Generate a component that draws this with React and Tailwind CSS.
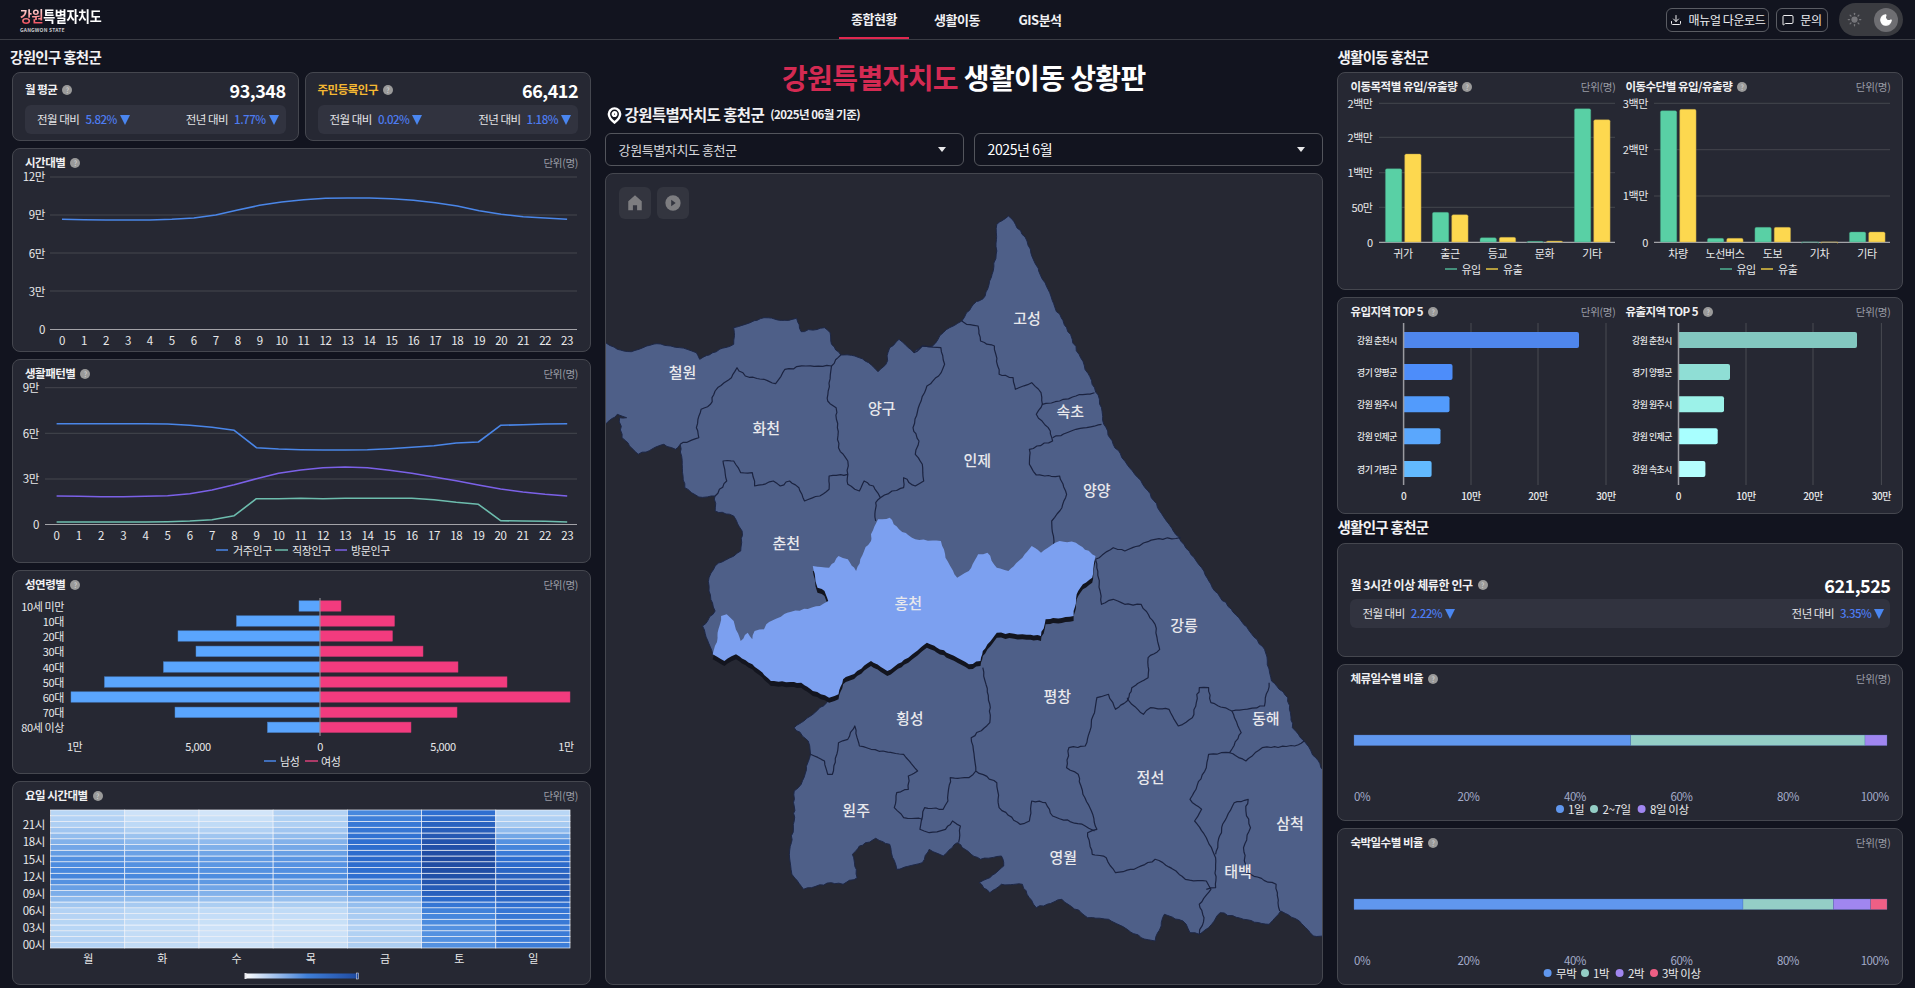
/**
 * Gangwon living-population dashboard — static snapshot of the Hongcheon view
 */

import { Download, MessageSquare, Sun, Moon } from 'lucide-react';

const HOURS = Array.from({ length: 24 }, (_, i) => i);

// page-space helpers: charts use viewBox in page pixels so coords are easy to check
function Plot({ x, y, w, h, children }) {
  return (
    <svg viewBox={`${x} ${y} ${w} ${h}`} width={w} height={h} className="block overflow-visible">
      {children}
    </svg>
  );
}

function T({ x, y, size = 11, anchor = 'middle', fill = '#e8e8ea', weight, children }) {
  return (
    <text x={x} y={y} fontSize={size} textAnchor={anchor} dominantBaseline="central" fill={fill} fontWeight={weight} letterSpacing="-0.4">
      {children}
    </text>
  );
}

function Help({ className = '' }) {
  return (
    <span className={`flex h-[10px] w-[10px] shrink-0 items-center justify-center rounded-full bg-[#9a9a9a] text-[7px] leading-none text-[#d8d8d8] ${className}`}>
      ?
    </span>
  );
}

function Down() {
  return <span className="ml-[3px] h-0 w-0 border-x-[5.5px] border-t-[10px] border-x-transparent border-t-[#4a86f0]" />;
}

function Card({ className = '', children }) {
  return <div className={`rounded-lg border border-[#45474f] bg-[#262833] ${className}`}>{children}</div>;
}

function Head({ title, unit = true }) {
  return (
    <div className="flex h-4 items-center justify-between">
      <div className="flex items-center gap-[5px]">
        <span className="text-[11.5px] font-bold tracking-[-0.5px] text-[#f0f0f2]">{title}</span>
        <Help />
      </div>
      {unit && <span className="text-[10.5px] tracking-[-0.3px] text-[#9a9ca5]">단위(명)</span>}
    </div>
  );
}

function SectionTitle({ children }) {
  return <h2 className="h-[32px] pt-[8px] text-[14.5px] font-bold leading-[18px] tracking-[-0.7px] text-[#f2f2f4]">{children}</h2>;
}

function Delta({ label, value }) {
  return (
    <div className="flex items-center">
      <span className="text-[11.5px] tracking-[-0.5px] text-[#e4e4e6]">{label}</span>
      <span className="ml-[6px] text-[11.5px] font-medium tracking-[-0.5px] text-[#4d7cf0]">{value}</span>
      <Down />
    </div>
  );
}

function Stat({ title, titleClass = 'text-[#f0f0f2]', value, month, year }) {
  return (
    <Card className="h-[69px] px-3 pt-2">
      <div className="flex h-[18px] items-center justify-between">
        <div className="flex items-center gap-[5px]">
          <span className={`text-[11.5px] font-bold tracking-[-0.5px] ${titleClass}`}>{title}</span>
          <Help />
        </div>
        <span className="text-[18px] font-bold tracking-[-0.5px] text-white">{value}</span>
      </div>
      <div className="mt-[6px] flex h-[29px] items-center justify-between rounded-md bg-[#31333f] pl-3 pr-[7px]">
        <Delta label="전월 대비" value={month} />
        <Delta label="전년 대비" value={year} />
      </div>
    </Card>
  );
}

/* ---------- left column charts ---------- */

function Grid({ lines, x1, x2, axisY, color = '#44464e' }) {
  return (
    <g>
      {lines.map(y => (
        <line key={y} x1={x1} x2={x2} y1={y} y2={y} stroke={color} strokeWidth="1" />
      ))}
      <line x1={x1} x2={x2} y1={axisY} y2={axisY} stroke="#a3a3a8" strokeWidth="1.2" />
    </g>
  );
}

function Series({ ys, x0, step, y0, color }) {
  const pts = ys.map((v, i) => `${(x0 + i * step).toFixed(1)},${(y0 + v / 3).toFixed(1)}`).join(' ');
  return <polyline points={pts} fill="none" stroke={color} strokeWidth="1.6" strokeLinejoin="round" />;
}

const TOTAL = [658, 659, 660, 660, 660, 658, 654, 645, 630, 616, 606, 599, 595, 594, 594, 596, 601, 608, 618, 632, 643, 650, 654, 658];

function HourlyChart() {
  return (
    <Plot x={25} y={173} w={553} h={175}>
      <Grid lines={[177, 215, 253, 291]} x1={50} x2={577} axisY={329.5} />
      {[['12만', 176], ['9만', 214], ['6만', 253], ['3만', 291], ['0', 329]].map(([t, y]) => (
        <T key={t} x={45} y={y} size={11.5} anchor="end">{t}</T>
      ))}
      <Series ys={TOTAL} x0={62} step={21.96} y0={0} color="#4a86e8" />
      {HOURS.map(h => <T key={h} x={62 + h * 21.96} y={340} size={11.5}>{h}</T>)}
    </Plot>
  );
}

const RESIDENT = [221, 221, 221, 221, 221, 222, 226, 232, 241, 293, 297, 299, 300, 300, 299, 296, 292, 287, 279, 276, 226, 224, 222, 221];
const WORKER = [516, 516, 516, 516, 516, 515, 513, 509, 497, 446, 446, 445, 446, 445, 445, 445, 445, 449, 457, 463, 512, 513, 514, 516];
const VISITOR = [438, 439, 440, 440, 439, 437, 431, 420, 404, 386, 370, 360, 353, 351, 353, 361, 370, 381, 392, 405, 417, 426, 433, 438];

function PatternChart() {
  const legend = [
    [216, 228, 233, '거주인구', '#4a86e8'],
    [275, 288, 292, '직장인구', '#6dbdae'],
    [335, 347, 351, '방문인구', '#7b61e8'],
  ];
  return (
    <Plot x={25} y={384} w={553} h={175}>
      <Grid lines={[387.7, 433.3, 479]} x1={45} x2={577} axisY={524.5} />
      {[['9만', 387], ['6만', 433], ['3만', 478], ['0', 524]].map(([t, y]) => (
        <T key={t} x={39} y={y} size={11.5} anchor="end">{t}</T>
      ))}
      <Series ys={RESIDENT} x0={56.6} step={22.2} y0={350} color="#4a86e8" />
      <Series ys={WORKER} x0={56.6} step={22.2} y0={350} color="#6dbdae" />
      <Series ys={VISITOR} x0={56.6} step={22.2} y0={350} color="#7b61e8" />
      {HOURS.map(h => <T key={h} x={56.6 + h * 22.2} y={535} size={11.5}>{h}</T>)}
      {legend.map(([a, b, tx, label, c]) => (
        <g key={label}>
          <line x1={a} x2={b} y1={550} y2={550} stroke={c} strokeWidth="1.5" />
          <T x={tx} y={550} anchor="start">{label}</T>
        </g>
      ))}
    </Plot>
  );
}

const AGE_ROWS = [
  ['10세 미만', 606, 299, 341],
  ['10대', 621, 236.5, 394.5],
  ['20대', 636, 178, 392.5],
  ['30대', 651.3, 196, 423],
  ['40대', 667, 163.5, 458],
  ['50대', 682, 104.5, 507],
  ['60대', 697, 71, 570],
  ['70대', 712.3, 175, 457],
  ['80세 이상', 727.3, 267.5, 411],
];

function AgeChart() {
  return (
    <Plot x={25} y={595} w={553} h={175}>
      {AGE_ROWS.map(([label, y, l, r]) => (
        <g key={label}>
          <T x={64} y={y} anchor="end">{label}</T>
          <rect x={l} y={y - 5.2} width={320 - l} height={10.4} fill="#5aa5fd" stroke="#4a86d0" strokeWidth="0.5" />
          <rect x={320} y={y - 5.2} width={r - 320} height={10.4} fill="#f23b7e" stroke="#c93a72" strokeWidth="0.5" />
        </g>
      ))}
      <line x1={320} x2={320} y1={598} y2={736} stroke="#9a9aa0" strokeWidth="1" />
      {[['1만', 74.6], ['5,000', 198], ['0', 320], ['5,000', 443], ['1만', 566]].map(([t, x], i) => (
        <T key={i} x={x} y={746}>{t}</T>
      ))}
      <line x1={264} x2={276} y1={761} y2={761} stroke="#4a86e8" strokeWidth="1.5" />
      <T x={280} y={761} anchor="start">남성</T>
      <line x1={305} x2={318} y1={761} y2={761} stroke="#d8407a" strokeWidth="1.5" />
      <T x={321} y={761} anchor="start">여성</T>
    </Plot>
  );
}

// anchor values every 3h (0..21) plus 23h
const HEAT = [
  [0.3, 0.28, 0.3, 0.5, 0.68, 0.62, 0.48, 0.32, 0.28],
  [0.24, 0.24, 0.27, 0.5, 0.66, 0.6, 0.45, 0.26, 0.2],
  [0.2, 0.2, 0.25, 0.48, 0.64, 0.58, 0.44, 0.25, 0.18],
  [0.22, 0.2, 0.25, 0.48, 0.64, 0.6, 0.48, 0.32, 0.3],
  [0.32, 0.3, 0.35, 0.55, 0.8, 0.82, 0.8, 0.75, 0.66],
  [0.62, 0.62, 0.7, 0.88, 0.97, 1, 0.95, 0.87, 0.8],
  [0.72, 0.74, 0.76, 0.88, 0.88, 0.8, 0.62, 0.35, 0.28],
];

const SCALE = [
  [0, [255, 255, 255]],
  [0.25, [192, 219, 246]],
  [0.45, [140, 184, 236]],
  [0.65, [74, 138, 222]],
  [0.8, [47, 111, 208]],
  [1, [31, 74, 160]],
];

function heatColor(v) {
  for (let i = 1; i < SCALE.length; i++) {
    if (v <= SCALE[i][0]) {
      const [a, ca] = SCALE[i - 1];
      const [b, cb] = SCALE[i];
      const t = (v - a) / (b - a);
      const c = ca.map((n, k) => Math.round(n + (cb[k] - n) * t));
      return `rgb(${c.join(',')})`;
    }
  }
  return 'rgb(31,74,160)';
}

function heatValue(day, hour) {
  const row = HEAT[day];
  if (hour >= 21) return row[7] + ((row[8] - row[7]) * (hour - 21)) / 2;
  const i = Math.floor(hour / 3);
  return row[i] + ((row[i + 1] - row[i]) * (hour % 3)) / 3;
}

function Heatmap() {
  const cw = (570 - 50.5) / 7;
  const rh = 138 / 24;
  const days = ['월', '화', '수', '목', '금', '토', '일'];
  const ticks = [['21시', 824], ['18시', 841], ['15시', 859.3], ['12시', 876.3], ['09시', 893.3], ['06시', 910], ['03시', 926.7], ['00시', 944]];
  return (
    <Plot x={25} y={806} w={553} h={175}>
      <defs>
        <linearGradient id="heat-legend">
          <stop offset="0" stopColor="#ffffff" />
          <stop offset="0.55" stopColor="#3f7fd8" />
          <stop offset="1" stopColor="#1f4aa0" />
        </linearGradient>
      </defs>
      {days.map((d, c) =>
        HOURS.map(h => (
          <rect
            key={`${d}${h}`}
            x={50.5 + c * cw}
            y={810 + (23 - h) * rh}
            width={cw}
            height={rh}
            fill={heatColor(heatValue(c, h))}
            stroke="#f2f6fc"
            strokeWidth="0.7"
          />
        ))
      )}
      {ticks.map(([t, y]) => <T key={t} x={45} y={y} anchor="end" size={11.5}>{t}</T>)}
      {days.map((d, c) => <T key={d} x={88 + c * 74.2} y={958}>{d}</T>)}
      <rect x={245} y={973.5} width={113} height={5} fill="url(#heat-legend)" />
      <rect x={244.5} y={973} width={2} height={6} fill="#e8e8ee" />
      <rect x={356.5} y={973} width={2} height={6} fill="#1f4aa0" stroke="#e8e8ee" strokeWidth="0.5" />
    </Plot>
  );
}

/* ---------- right column charts ---------- */

function Columns({ x, lines, axisX, ticks, tickX, groups, legendX }) {
  return (
    <Plot x={x} y={97} w={265} h={188}>
      <Grid lines={lines} x1={axisX} x2={x + 265} axisY={242.3} />
      {ticks.map(([t, y], i) => <T key={i} x={tickX} y={y} anchor="end" size={11}>{t}</T>)}
      {groups.map(([label, cx, a, b]) => (
        <g key={label}>
          <path d={`M${cx - 17.6} 242 V${a / 3 + 1.5} q0 -1.5 1.5 -1.5 h13.4 q1.5 0 1.5 1.5 V242 Z`} fill="#59d0a5" stroke="#3f8f78" strokeWidth="0.4" />
          <path d={`M${cx + 1.7} 242 V${b / 3 + 1.5} q0 -1.5 1.5 -1.5 h13.4 q1.5 0 1.5 1.5 V242 Z`} fill="#fdd84f" stroke="#a8934a" strokeWidth="0.4" />
          <T x={cx} y={253}>{label}</T>
        </g>
      ))}
      <line x1={legendX} x2={legendX + 12} y1={269} y2={269} stroke="#4fb394" strokeWidth="1.5" />
      <T x={legendX + 16.4} y={269} anchor="start">유입</T>
      <line x1={legendX + 41} x2={legendX + 53} y1={269} y2={269} stroke="#e5c443" strokeWidth="1.5" />
      <T x={legendX + 58} y={269} anchor="start">유출</T>
    </Plot>
  );
}

const ROW_Y = [340, 372, 404.3, 436.3, 469];

function Top5({ x, axisX, gridX, labelX, rows }) {
  return (
    <Plot x={x} y={322} w={265} h={188}>
      {gridX.map(g => <line key={g} x1={g} x2={g} y1={323} y2={485} stroke="#484a52" strokeWidth="1" />)}
      {rows.map(([label, end, color], i) => (
        <g key={label}>
          <T x={labelX} y={ROW_Y[i]} anchor="end" size={8.8} weight={500}>{label}</T>
          <path d={`M${axisX} ${ROW_Y[i] - 8} H${end - 2} q2 0 2 2 V${ROW_Y[i] + 6} q0 2 -2 2 H${axisX} Z`} fill={color} />
        </g>
      ))}
      <line x1={axisX} x2={axisX} y1={323} y2={485} stroke="#9a9aa0" strokeWidth="1.5" />
      {['0', '10만', '20만', '30만'].map((t, i) => (
        <T key={t} x={i === 0 ? axisX : gridX[i - 1]} y={495} size={10} weight={500}>{t}</T>
      ))}
    </Plot>
  );
}

function RatioBar({ y, stops, legend }) {
  const ticks = [['0%', 1363], ['20%', 1469.5], ['40%', 1576], ['60%', 1682.5], ['80%', 1789], ['100%', 1875.7]];
  return (
    <Plot x={1351} y={y} w={540} h={130}>
      {stops.map(([a, b, c]) => (
        <rect key={a} x={a} y={y + 48} width={b - a} height={10.6} fill={c} stroke="#4d6fb0" strokeWidth="0.3" />
      ))}
      {ticks.map(([t, x]) => <T key={t} x={x} y={y + 109} fill="#a3abc9" size={11.5}>{t}</T>)}
      {legend.map(([cx, tx, label, c]) => (
        <g key={label}>
          <circle cx={cx} cy={y + 122} r={4} fill={c} />
          <T x={tx} y={y + 122} anchor="start" size={11.5}>{label}</T>
        </g>
      ))}
    </Plot>
  );
}

/* ---------- map ---------- */

const p8 = pts => pts.map(([x, y]) => [600 + x * 0.4656, 200 + y / 3]);
const p9 = pts => pts.map(([x, y]) => [600 + x * 0.4656, 590 + y / 3]);

// break long edges up and shake them a little so boundaries read as coastline, not polygons
function rough(pts, seed = 7) {
  let s = seed;
  const rnd = () => {
    s = (s * 9301 + 49297) % 233280;
    return s / 233280 - 0.5;
  };
  const out = [];
  for (let i = 0; i < pts.length - 1; i++) {
    const [ax, ay] = pts[i];
    const [bx, by] = pts[i + 1];
    const n = Math.max(1, Math.round(Math.hypot(bx - ax, by - ay) / 4));
    for (let k = 0; k < n; k++) {
      const t = k / n;
      const j = k === 0 ? 0 : 1.6;
      out.push([ax + (bx - ax) * t + rnd() * j, ay + (by - ay) * t + rnd() * j]);
    }
  }
  out.push(pts[pts.length - 1]);
  return out;
}

const toD = (pts, close) => `M${pts.map(([x, y]) => `${x.toFixed(1)} ${y.toFixed(1)}`).join('L')}${close ? 'Z' : ''}`;

const OUTLINE = [
  ...p8([[-20, 410], [10, 425], [35, 445], [65, 452], [90, 440], [120, 428], [150, 435], [185, 445], [205, 455], [212, 475], [240, 455], [285, 430], [285, 380], [320, 365], [350, 350], [395, 358], [420, 352], [430, 392], [480, 380], [492, 395], [495, 430], [515, 462], [545, 465], [575, 485], [595, 512], [612, 490], [620, 440], [640, 415], [660, 440], [672, 455], [690, 435], [712, 435], [735, 395], [775, 360], [785, 335], [800, 310], [825, 285], [840, 220], [850, 150], [850, 70], [875, 45], [890, 70], [915, 120], [930, 180], [960, 265], [975, 320], [1000, 380], [1030, 470], [1060, 560], [1075, 620], [1080, 670], [1100, 730], [1135, 800], [1175, 870], [1200, 930], [1245, 1020], [1290, 1100]]),
  ...p9([[1318, 0], [1375, 90], [1425, 175], [1440, 270], [1475, 320], [1485, 410], [1510, 450], [1535, 500], [1555, 550], [1620, 620], [1620, 1035], [1555, 1035], [1530, 1035], [1500, 990], [1460, 960], [1435, 1000], [1380, 985], [1330, 965], [1305, 1010], [1285, 1030], [1265, 1025], [1250, 990], [1210, 970], [1190, 1050], [1160, 1040], [1130, 1015], [1090, 985], [1045, 980], [990, 925], [935, 950], [915, 910], [905, 880], [860, 880], [835, 905], [812, 875], [835, 860], [865, 825], [860, 795], [815, 805], [795, 790], [765, 755], [735, 795], [705, 775], [690, 815], [635, 835], [620, 760], [590, 742], [555, 765], [540, 790], [550, 860], [520, 880], [495, 875], [435, 895], [410, 850], [405, 780], [415, 690], [415, 600], [430, 580], [450, 490], [445, 450], [415, 410], [450, 375], [485, 335], [490, 320], [300, 200], [240, 190], [218, 105], [245, 60], [232, 0]]),
  ...p8([[232, 1130], [245, 1095], [300, 1050], [303, 990], [285, 945], [245, 930], [245, 885], [210, 888], [180, 860], [170, 730], [160, 745], [135, 730], [80, 760], [45, 710], [40, 650], [55, 650], [35, 640], [10, 670], [-20, 680]]),
];

const HONGCHEON = [
  ...p8([[455, 1095], [490, 1100], [510, 1065], [530, 1075], [548, 1110], [565, 1050], [580, 1020], [580, 1000], [595, 955], [620, 950], [640, 985], [675, 1015], [730, 1020], [740, 1070], [750, 1095], [765, 1130], [790, 1110], [810, 1060], [830, 1055], [850, 1100], [875, 1110], [905, 1070], [925, 1035], [945, 1055], [985, 1020], [1020, 1025], [1062, 1065], [1055, 1130], [1035, 1150]]),
  ...p9([[1025, 0], [1015, 60], [1015, 75], [955, 85], [945, 135], [905, 130], [850, 125], [820, 180], [815, 210], [790, 220], [750, 190], [700, 155], [660, 200], [615, 240], [580, 210], [550, 240], [520, 265], [510, 310], [490, 320], [455, 300], [430, 275], [365, 270], [325, 220], [290, 190], [265, 210], [240, 190], [250, 140], [258, 75], [270, 70], [285, 90], [300, 150], [315, 125], [325, 145], [330, 120], [350, 115], [355, 100], [400, 65], [470, 45], [488, 30], [480, 0]]),
  ...p8([[465, 1160], [455, 1095]]),
];

const BORDERS = [
  p8([[515, 462], [495, 495], [440, 495], [395, 505], [375, 548], [350, 535], [310, 525], [292, 500], [280, 530], [245, 570], [235, 610], [215, 625], [205, 680], [210, 710], [170, 730]]),
  p8([[495, 495], [488, 570], [487, 600], [505, 620], [510, 740], [530, 780], [530, 820], [490, 825], [490, 865], [470, 885], [437, 900], [425, 860], [405, 840], [385, 855], [370, 840], [330, 855], [325, 815], [300, 815], [285, 780], [262, 780], [270, 840], [245, 885]]),
  p8([[672, 455], [690, 435], [730, 440], [738, 490], [725, 525], [700, 555], [680, 630], [670, 680], [683, 720], [675, 760], [690, 790], [693, 840], [675, 855], [650, 830], [650, 860], [625, 870], [600, 890], [590, 905], [590, 960]]),
  p8([[530, 820], [530, 850], [555, 870], [565, 840], [585, 855], [600, 890]]),
  p8([[775, 360], [785, 370], [810, 375], [815, 420], [845, 435], [855, 520], [885, 530], [890, 565], [925, 545], [945, 575], [948, 610], [985, 600], [1020, 585], [1060, 575]]),
  p8([[948, 610], [935, 640], [965, 690], [970, 720], [920, 745], [920, 790], [935, 822], [985, 825], [1000, 880], [990, 920], [968, 960], [972, 1030]]),
  p8([[970, 710], [1020, 685], [1075, 670]]),
  p8([[1062, 1075], [1100, 1040], [1125, 1050], [1190, 1015], [1245, 1010]]),
  [...p8([[1062, 1075], [1070, 1150]]), ...p9([[1072, 0], [1075, 40], [1100, 25], [1125, 40], [1160, 40], [1190, 100], [1200, 175], [1175, 200], [1175, 260], [1140, 290], [1130, 330], [1105, 355], [1090, 310], [1065, 320], [1050, 420], [1040, 465], [1005, 470], [1000, 530], [1025, 550], [1035, 610], [1050, 650], [1065, 715], [1045, 725], [1055, 790], [1085, 800], [1105, 845], [1145, 835], [1190, 805], [1235, 840], [1255, 865], [1300, 870], [1310, 895], [1285, 940], [1295, 980], [1285, 1030]])],
  p9([[1130, 320], [1140, 340], [1165, 370], [1180, 350], [1220, 355], [1240, 405], [1270, 380], [1285, 290], [1305, 290], [1310, 335], [1355, 360], [1425, 345], [1435, 275]]),
  p9([[1355, 360], [1375, 425], [1350, 485], [1385, 510], [1420, 470], [1490, 465], [1510, 450]]),
  p9([[1350, 485], [1305, 490], [1300, 530], [1265, 625], [1290, 655], [1275, 690], [1300, 740], [1320, 800], [1320, 890], [1300, 895]]),
  p9([[1320, 790], [1335, 700], [1360, 635], [1390, 625], [1385, 660], [1395, 710], [1380, 770], [1385, 845], [1450, 880], [1458, 960]]),
  p9([[820, 230], [835, 340], [835, 395], [795, 440], [805, 540], [850, 575], [855, 650], [900, 700], [920, 690], [925, 630], [955, 635], [970, 675], [1040, 705], [1060, 720]]),
  p9([[805, 540], [790, 560], [750, 560], [745, 630], [735, 655], [695, 650], [688, 690], [685, 715], [705, 725], [740, 715], [755, 690], [772, 705], [768, 755]]),
  p9([[450, 490], [480, 510], [487, 550], [497, 550], [510, 455], [530, 445], [545, 405], [555, 465], [580, 475], [650, 490], [680, 540], [660, 555], [660, 595], [635, 605], [630, 650], [650, 680], [690, 685]]),
];

const LABELS = [
  ...[[175, 510, '철원'], [355, 680, '화천'], [603, 620, '양구'], [915, 348, '고성'], [1008, 628, '속초'], [808, 775, '인제'], [1065, 865, '양양'], [398, 1025, '춘천']].map(([x, y, n]) => [...p8([[x, y]])[0], n]),
  ...[[660, 35, '홍천'], [1252, 100, '강릉'], [663, 378, '횡성'], [980, 312, '평창'], [1428, 380, '동해'], [548, 655, '원주'], [1180, 555, '정선'], [993, 797, '영월'], [1480, 695, '삼척'], [1368, 838, '태백']].map(([x, y, n]) => [...p9([[x, y]])[0], n]),
];

function RegionMap() {
  const outline = toD(rough(OUTLINE, 11), true);
  const hong = toD(rough(HONGCHEON, 23), true);
  return (
    <svg viewBox="605 173 718 812" width="718" height="812" className="block">
      <path d={outline} fill="#4e5f88" stroke="#1d2746" strokeWidth="1" />
      {BORDERS.map((b, i) => (
        <path key={i} d={toD(rough(b, 31 + i * 13))} fill="none" stroke="#1b2340" strokeWidth="1.2" strokeLinejoin="round" />
      ))}
      <path d={hong} fill="#13151f" transform="translate(0 5)" />
      <path d={hong} fill="#7ca0f0" />
      {LABELS.map(([x, y, name]) => (
        <text key={name} x={x} y={y} fontSize="15" textAnchor="middle" dominantBaseline="central" fill="#e8e8ec" fontWeight="500">
          {name}
        </text>
      ))}
    </svg>
  );
}

function HomeIcon() {
  return (
    <svg viewBox="0 0 20 20" className="h-[18px] w-[18px]" fill="#7d7d80">
      <path d="M10 1.5 2.5 8v10h5.2v-5.5h4.6V18h5.2V8z" />
    </svg>
  );
}

function PlayIcon() {
  return (
    <svg viewBox="0 0 20 20" className="h-[18px] w-[18px]">
      <circle cx="10" cy="10" r="8.5" fill="#7d7d80" />
      <path d="M8 6.5v7l5-3.5z" fill="#33353f" />
    </svg>
  );
}

function Caret() {
  return <span className="h-0 w-0 border-x-[4px] border-t-[5px] border-x-transparent border-t-[#e8e8ea]" />;
}

function Picker({ className, textClass, children }) {
  return (
    <div className={`flex h-[33px] items-center justify-between rounded-md border border-[#53555c] pl-[13px] pr-[17px] ${className}`}>
      <span className={textClass}>{children}</span>
      <Caret />
    </div>
  );
}

/* ---------- page ---------- */

function Header() {
  return (
    <header className="flex h-[40px] items-center justify-between border-b border-[#3a3c44] pl-[20px] pr-[12px]">
      <div className="w-[228px] leading-none">
        <div className="origin-left scale-y-[1.15] text-[13px] font-bold leading-[16px] tracking-[-0.35px] text-white">
          <span className="bg-linear-to-b from-white to-[#e8264a] bg-clip-text text-transparent">강원</span>특별자치도
        </div>
        <div className="mt-[3px] text-[5px] font-bold tracking-[0.2px] text-[#c8c8cc]">GANGWON STATE</div>
      </div>
      <nav className="flex h-full items-center">
        <a className="flex h-full w-[70px] items-center justify-center border-b-2 border-[#e02850] pt-[1px] text-[13px] font-bold tracking-[-0.5px] text-[#f0f0f2]">종합현황</a>
        <a className="ml-[13px] flex h-full w-[70px] items-center justify-center text-[13px] font-bold tracking-[-0.5px] text-[#f0f0f2]">생활이동</a>
        <a className="ml-[13px] flex h-full w-[70px] items-center justify-center text-[13px] font-bold tracking-[-0.5px] text-[#f0f0f2]">GIS분석</a>
      </nav>
      <div className="flex items-center">
        <button className="flex h-[24px] w-[103px] items-center justify-center gap-[7px] rounded-md border border-[#5a5c63] text-[12px] tracking-[-0.4px] text-[#eeeef0]">
          <Download size={12} />
          매뉴얼 다운로드
        </button>
        <button className="ml-[7px] flex h-[24px] w-[52px] items-center justify-center gap-[6px] rounded-md border border-[#5a5c63] text-[12px] tracking-[-0.4px] text-[#eeeef0]">
          <MessageSquare size={12} />
          문의
        </button>
        <div className="ml-[11px] flex h-[33px] w-[64px] items-center justify-between rounded-full bg-[#3a3b40] pl-[8px] pr-[5px]">
          <Sun size={15} className="text-[#77777b]" fill="#77777b" />
          <span className="flex h-[24px] w-[24px] items-center justify-center rounded-full bg-[#6e6e72]">
            <Moon size={14} className="text-white" fill="#ffffff" />
          </span>
        </div>
      </div>
    </header>
  );
}

export default function App() {
  return (
    <div className="h-[988px] w-[1915px] overflow-hidden bg-[#12141f] font-['Noto_Sans_CJK_KR','Noto_Sans',sans-serif] text-[#f0f0f2]">
      <Header />
      <main className="flex">
        <section className="ml-[10px] w-[581px]">
          <SectionTitle>강원인구 홍천군</SectionTitle>
          <div className="ml-[2px] flex flex-col gap-[7px]">
            <div className="grid grid-cols-2 gap-[6px]">
              <Stat title="월 평균" value="93,348" month="5.82%" year="1.77%" />
              <Stat title="주민등록인구" titleClass="text-[#f5b832]" value="66,412" month="0.02%" year="1.18%" />
            </div>
            <Card className="h-[204px] px-3 pt-[6px]">
              <Head title="시간대별" />
              <div className="mt-[2px]"><HourlyChart /></div>
            </Card>
            <Card className="h-[204px] px-3 pt-[6px]">
              <Head title="생활패턴별" />
              <div className="mt-[2px]"><PatternChart /></div>
            </Card>
            <Card className="h-[204px] px-3 pt-[6px]">
              <Head title="성연령별" />
              <div className="mt-[2px]"><AgeChart /></div>
            </Card>
            <Card className="h-[204px] px-3 pt-[6px]">
              <Head title="요일 시간대별" />
              <div className="mt-[2px]"><Heatmap /></div>
            </Card>
          </div>
        </section>

        <section className="ml-[13.6px] flex h-[945px] w-[718.4px] flex-col">
          <h1 className="mt-[17px] text-center text-[28px] font-bold leading-[40px] tracking-[-0.6px] text-white">
            <span className="text-[#d42a52]">강원특별자치도</span> 생활이동 상황판
          </h1>
          <div className="mt-[8px] flex h-[20px] items-center pl-[1px]">
            <svg viewBox="0 0 24 24" className="h-[17px] w-[17px]" fill="none" stroke="#ffffff" strokeWidth="3.4">
              <path d="M20 10c0 6-8 12-8 12s-8-6-8-12a8 8 0 0 1 16 0Z" />
              <circle cx="12" cy="10" r="2.5" />
            </svg>
            <span className="ml-[2px] text-[15.5px] font-bold tracking-[-0.6px]">강원특별자치도 홍천군</span>
            <span className="ml-[6px] text-[11.5px] font-bold tracking-[-0.5px]">(2025년 06월 기준)</span>
          </div>
          <div className="mt-[8px] flex gap-[10px]">
            <Picker className="w-[359px]" textClass="text-[13px] tracking-[-0.4px] text-[#d8d8dc]">강원특별자치도 홍천군</Picker>
            <Picker className="w-[349px]" textClass="text-[14px] tracking-[-0.4px] text-white">2025년 6월</Picker>
          </div>
          <Card className="relative mt-[7px] flex-1 overflow-hidden">
            <RegionMap />
            <div className="absolute left-[13px] top-[13px] flex gap-[6px]">
              <button className="flex h-[32px] w-[32px] items-center justify-center rounded-md bg-[#33353f]"><HomeIcon /></button>
              <button className="flex h-[32px] w-[32px] items-center justify-center rounded-md bg-[#33353f]"><PlayIcon /></button>
            </div>
          </Card>
        </section>

        <section className="ml-[14.4px] w-[566px]">
          <SectionTitle>생활이동 홍천군</SectionTitle>
          <Card className="h-[218px] px-3 pt-[6px]">
            <div className="grid grid-cols-2 gap-[10px]">
              <div>
                <Head title="이동목적별 유입/유출량" />
                <div className="mt-[2px]">
                  <Columns
                    x={1351}
                    lines={[103.3, 137.3, 172.7, 207.3]}
                    axisX={1380}
                    tickX={1373.6}
                    ticks={[['2백만', 103], ['2백만', 137], ['1백만', 172], ['50만', 207], ['0', 242]]}
                    groups={[['귀가', 1404, 506, 462], ['출근', 1451, 637, 644], ['등교', 1498.6, 713, 712], ['문화', 1545.6, 724, 723], ['기타', 1593, 326, 359]]}
                    legendX={1446}
                  />
                </div>
              </div>
              <div>
                <Head title="이동수단별 유입/유출량" />
                <div className="mt-[2px]">
                  <Columns
                    x={1626}
                    lines={[103.3, 149.7, 196]}
                    axisX={1655}
                    tickX={1649}
                    ticks={[['3백만', 103], ['2백만', 149], ['1백만', 195], ['0', 242]]}
                    groups={[['차량', 1679, 332, 328], ['노선버스', 1726, 715, 715], ['도보', 1773.5, 682, 682], ['기차', 1820.5, 726, 726], ['기타', 1868, 696, 696]]}
                    legendX={1721}
                  />
                </div>
              </div>
            </div>
          </Card>
          <Card className="mt-[7px] h-[217px] px-3 pt-[6px]">
            <div className="grid grid-cols-2 gap-[10px]">
              <div>
                <Head title="유입지역 TOP 5" />
                <div className="mt-[2px]">
                  <Top5
                    x={1351}
                    axisX={1404.6}
                    gridX={[1472, 1539, 1607]}
                    labelX={1398}
                    rows={[['강원 춘천시', 1580, '#4f86ec'], ['경기 양평군', 1453.5, '#4d8dfa'], ['강원 원주시', 1450.5, '#529bfc'], ['강원 인제군', 1441.5, '#5aa7fd'], ['경기 가평군', 1432.6, '#62baff']]}
                  />
                </div>
              </div>
              <div>
                <Head title="유출지역 TOP 5" />
                <div className="mt-[2px]">
                  <Top5
                    x={1626}
                    axisX={1679.5}
                    gridX={[1747, 1814, 1882.4]}
                    labelX={1673}
                    rows={[['강원 춘천시', 1858, '#82c7c0'], ['경기 양평군', 1731, '#8fded5'], ['강원 원주시', 1725, '#9cf2e9'], ['강원 인제군', 1718.7, '#a8ffff'], ['강원 속초시', 1706.4, '#b5ffff']]}
                  />
                </div>
              </div>
            </div>
          </Card>
          <div className="-mt-[4px]">
            <SectionTitle>생활인구 홍천군</SectionTitle>
          </div>
          <Card className="mt-[1px] h-[114px] px-3 pt-[32px]">
            <div className="flex h-[18px] items-center justify-between">
              <div className="flex items-center gap-[5px]">
                <span className="text-[12px] font-bold tracking-[-0.4px]">월 3시간 이상 체류한 인구</span>
                <Help />
              </div>
              <span className="text-[18px] font-bold tracking-[-0.5px] text-white">621,525</span>
            </div>
            <div className="mt-[5px] flex h-[29px] items-center justify-between rounded-md bg-[#31333f] pl-3 pr-[6px]">
              <Delta label="전월 대비" value="2.22%" />
              <Delta label="전년 대비" value="3.35%" />
            </div>
          </Card>
          <Card className="mt-[7px] h-[157px] px-3 pt-[6px]">
            <Head title="체류일수별 비율" />
            <RatioBar
              y={687}
              stops={[[1355, 1631.8, '#6097ee'], [1631.8, 1866, '#94cec6'], [1866, 1888, '#a086f0']]}
              legend={[[1561, 1569, '1일', '#6097ee'], [1595, 1603.5, '2~7일', '#94cec6'], [1642.6, 1651, '8일 이상', '#a086f0']]}
            />
          </Card>
          <Card className="mt-[7px] h-[157px] px-3 pt-[6px]">
            <Head title="숙박일수별 비율" />
            <RatioBar
              y={851}
              stops={[[1355, 1744, '#6097ee'], [1744, 1834.3, '#94cec6'], [1834.3, 1871.6, '#a086f0'], [1871.6, 1888, '#ee5f85']]}
              legend={[[1548.6, 1557, '무박', '#6097ee'], [1586, 1594, '1박', '#94cec6'], [1620.6, 1629, '2박', '#a086f0'], [1655, 1663, '3박 이상', '#ee5f85']]}
            />
          </Card>
        </section>
      </main>
    </div>
  );
}
